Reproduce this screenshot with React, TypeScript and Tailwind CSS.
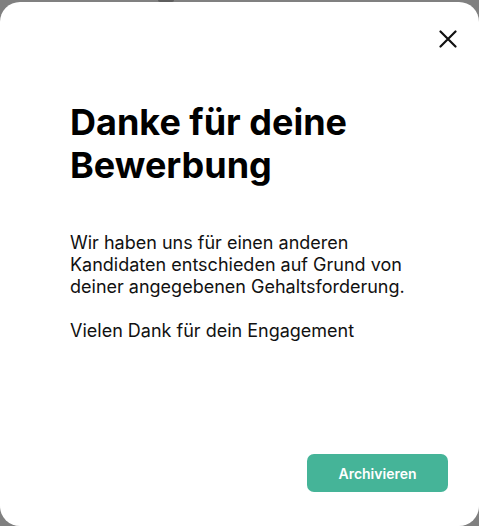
import React from "react";

export default function App() {
  return (
    <div
      className="relative w-[479px] h-[526px] bg-[#808080] pt-[2px] overflow-hidden"
      style={{ fontFamily: "Inter, 'Noto Sans', sans-serif" }}
    >
      <div className="absolute left-[158px] top-0 w-[16px] h-[2px] rounded-b-full bg-[#5e5e5e]" />
      <div className="h-[524px] bg-white rounded-[20px] flex flex-col pl-[70px] pr-[31px]">
        <div className="flex justify-end pt-[28px] -mr-[9px]">
          <button aria-label="Schließen" className="w-[18px] h-[18px] flex items-center justify-center">
            <svg width="18" height="18" viewBox="0 0 18 18" fill="none">
              <path d="M1.5 1.5L16.5 16.5M16.5 1.5L1.5 16.5" stroke="#111" strokeWidth="2.2" strokeLinecap="round" />
            </svg>
          </button>
        </div>
        <h1 className="mt-[53px] text-[36px] leading-[43px] font-bold text-black">
          Danke für deine
          <br />
          Bewerbung
        </h1>
        <div className="mt-[45px] text-[18px] leading-[22px] text-[#111] font-normal">
          <p>
            Wir haben uns für einen anderen
            <br />
            Kandidaten entschieden auf Grund von
            <br />
            deiner angegebenen Gehaltsforderung.
          </p>
          <p className="mt-[22px]">Vielen Dank für dein Engagement</p>
        </div>
        <div className="flex-1" />
        <div className="flex justify-end pb-[34px]">
          <button className="w-[141px] h-[38px] rounded-[7px] bg-[#45b498] text-white text-[14px] font-semibold">
            Archivieren
          </button>
        </div>
      </div>
    </div>
  );
}
